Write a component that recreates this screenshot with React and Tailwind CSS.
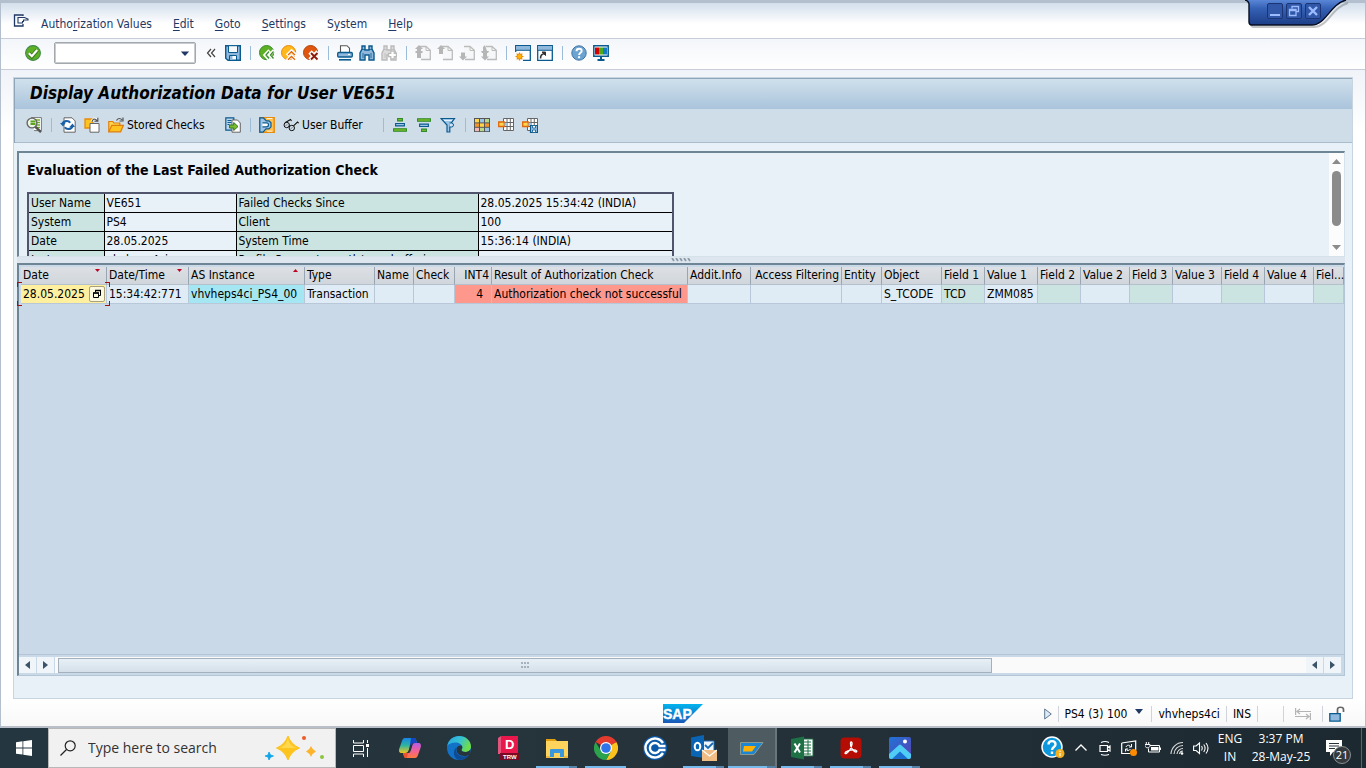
import { useState } from "react";

const menus = [
  ["Autho", "r", "ization Values"],
  ["", "E", "dit"],
  ["", "G", "oto"],
  ["", "S", "ettings"],
  ["S", "y", "stem"],
  ["", "H", "elp"],
];

const columns = [
  { label: "Date", width: 86, sort: "down" },
  { label: "Date/Time", width: 82, value: "15:34:42:771", sort: "down" },
  { label: "AS Instance", width: 116, value: "vhvheps4ci_PS4_00", sort: "up", cell: "bg-[#a4e6f2]" },
  { label: "Type", width: 70, value: "Transaction" },
  { label: "Name", width: 39 },
  { label: "Check", width: 41 },
  { label: "INT4", width: 37, value: "4", cell: "bg-[#ff988c]", number: true },
  { label: "Result of Authorization Check", width: 196, value: "Authorization check not successful", cell: "bg-[#ff988c]" },
  { label: "Addit.Info", width: 63 },
  { label: "Access Filtering", width: 91, number: true },
  { label: "Entity", width: 40 },
  { label: "Object", width: 60, value: "S_TCODE" },
  { label: "Field 1", width: 43, value: "TCD", cell: "bg-[#cbe4e2]" },
  { label: "Value 1", width: 53, value: "ZMM085" },
  { label: "Field 2", width: 43, cell: "bg-[#cbe4e2]" },
  { label: "Value 2", width: 49 },
  { label: "Field 3", width: 43, cell: "bg-[#cbe4e2]" },
  { label: "Value 3", width: 49 },
  { label: "Field 4", width: 43, cell: "bg-[#cbe4e2]" },
  { label: "Value 4", width: 49 },
  { label: "Fiel...", cell: "bg-[#cbe4e2]" },
];

const summary = [
  ["User Name", "VE651", "Failed Checks Since", "28.05.2025 15:34:42 (INDIA)"],
  ["System", "PS4", "Client", "100"],
  ["Date", "28.05.2025", "System Time", "15:36:14 (INDIA)"],
  ["Instance", "vhvheps4ci", "Profile Parameter auth/new_buffering", ""],
];

function Icon({ children, className = "size-4 shrink-0", box = "0 0 16 16" }) {
  return (
    <svg className={className} viewBox={box} fill="none" aria-hidden="true">
      {children}
    </svg>
  );
}

function ToolButton({ label, children, className = "w-[22px] justify-center" }) {
  return (
    <button type="button" aria-label={label} className={`flex h-[22px] shrink-0 items-center ${className}`}>
      {children}
    </button>
  );
}

function Separator({ className = "w-3" }) {
  return (
    <span className={`flex shrink-0 justify-center ${className}`}>
      <span className="h-[14px] w-px bg-[#9dbcd8]" />
    </span>
  );
}

/* ---------- standard toolbar icons ---------- */

function EnterIcon() {
  return (
    <Icon>
      <circle cx="8" cy="8" r="7.4" fill="#5db024" stroke="#3f8a4a" strokeWidth="1.1" />
      <path d="M3.8 8.4l3 3.1 5.4-6.4" stroke="#3d7c24" strokeWidth="4" />
      <path d="M3.8 8.2l3 3 5.4-6.2" stroke="#fff" strokeWidth="2.2" />
    </Icon>
  );
}

function SaveIcon() {
  return (
    <Icon>
      <path d="M.7 .7h14.600v14.600H3l-2.300-2z" fill="#8fb8dc" stroke="#0b5a8e" strokeWidth="1.400" />
      <path d="M3.500 .7h9v6.800h-9z" fill="#f4f9fd" stroke="#0b5a8e" />
      <path d="M4.500 10.500h7v4.500h-7z" fill="#fff" stroke="#0b5a8e" />
      <path d="M5 11h2.500v4H5z" fill="#8fb8dc" />
    </Icon>
  );
}

function NavIcon({ fill, edge, children }) {
  return (
    <Icon>
      <circle cx="7.600" cy="7.600" r="7.100" fill={fill} stroke={edge} />
      {children}
    </Icon>
  );
}

function PrintIcon() {
  return (
    <Icon>
      <path d="M3.500 7V.7h6.500l2.500 2.500V7" fill="#fff" stroke="#555" strokeWidth="1.100" />
      <rect x=".7" y="7.500" width="14.600" height="4.500" rx="1" fill="#8fb8dc" stroke="#0b5a8e" strokeWidth="1.300" />
      <path d="M2 14.800h12" stroke="#0b5a8e" strokeWidth="1.600" />
      <path d="M11 9.500h2" stroke="#fff" />
    </Icon>
  );
}

function FindIcon({ fill, edge, next }) {
  return (
    <Icon>
      <path d="M3 1h3v4h4V1h3v3l2 4v7h-5v-5H6v5H1V8l2-4z" fill={fill} stroke={edge} strokeWidth="1.400" />
      <path d="M3 4.500h3M10 4.500h3M4 8v5M12 8v5" stroke={edge} strokeWidth=".8" />
      {next && <path d="M11.500 5.500v9M7 10h9" stroke="#bbb" strokeWidth="4.400" />}
      {next && <path d="M11.500 6.700v6.600M8.200 10h6.600" stroke="#fff" strokeWidth="2.200" />}
    </Icon>
  );
}

function PageIcon({ arrows }) {
  return (
    <Icon>
      <path d="M5 1.500h6l4.300 3.800v9.200H6" fill="#f6f7f8" stroke="#bcbcbc" strokeWidth="1.300" />
      <path d="M11 1.500v4h4" stroke="#bcbcbc" />
      <path d={arrows} fill="#b6b6b6" />
    </Icon>
  );
}

function SessionIcon({ shortcut }) {
  return (
    <Icon>
      <path d="M.7 .7h14.600v14.600H.7z" fill="#fff" stroke="#0b5a8e" strokeWidth="1.300" />
      <path d="M1 1h14v4H1z" fill="#8fb8dc" />
      <path d="M1 5.300h14" stroke="#0b5a8e" />
      {shortcut ? (
        <>
          <path d="M3.500 13.500c0-3 1-4.500 4-5" stroke="#333" strokeWidth="1.600" />
          <path d="M5 7h3.500v3.500z" fill="#333" stroke="#333" />
        </>
      ) : (
        <>
          <path d="M0 7h8v9H0z" fill="#f9fafc" />
          <path d="M4.500 7.500v8M.5 11.500h8M1.700 8.700l5.600 5.600M7.300 8.700l-5.600 5.600" stroke="#e98b0c" strokeWidth="1.200" />
          <circle cx="4.500" cy="11.500" r="2.600" fill="#ffb400" stroke="#e98b0c" />
        </>
      )}
    </Icon>
  );
}

function HelpIcon() {
  return (
    <Icon>
      <circle cx="8" cy="8" r="7.200" fill="#6da3d0" stroke="#3f76a6" />
      <path d="M5.500 6.200c0-3.400 5.200-3.200 5.200-.2 0 1.800-2.600 1.900-2.600 4" stroke="#fff" strokeWidth="1.900" />
      <path d="M7.100 11.200h2v2h-2z" fill="#fff" />
    </Icon>
  );
}

function LayoutIcon() {
  return (
    <Icon>
      <path d="M.8 .8h14.400v10.400H.8z" fill="#fff" stroke="#0b5a8e" strokeWidth="1.500" />
      <path d="M2 2.500h4v7H2z" fill="#d40000" />
      <path d="M6 2.500h4v7H6z" fill="#4bab1a" />
      <path d="M10 2.500h4v7h-4z" fill="#1579c4" />
      <path d="M8 11v3.500M4.500 15h7" stroke="#0b5a8e" strokeWidth="2" />
    </Icon>
  );
}

/* ---------- application toolbar icons ---------- */

function DetailIcon() {
  return (
    <Icon>
      <path d="M5 .6h10.400v13H8" fill="#fff" stroke="#777" />
      <path d="M8 3h6M9.500 5.500H14M9.500 8H14M9.500 10.500H14" stroke="#6caf22" strokeWidth="1.500" />
      <circle cx="6" cy="6" r="4.900" fill="#eef5e8" stroke="#666" strokeWidth="1.400" />
      <path d="M4.500 4.500h5M4.500 7h5" stroke="#5aa51c" strokeWidth="2" />
      <path d="M9.500 9.800l5.500 5.400" stroke="#555" strokeWidth="2.400" />
    </Icon>
  );
}

function RefreshIcon() {
  return (
    <Icon>
      <path d="M4 .8h8l3.200 3.200v11.200H4z" fill="#fff" stroke="#666" />
      <path d="M2.500 7c.8-3.500 6-4 7.600-1.200M12.500 9c-.8 3.500-6 4-7.600 1.200" stroke="#1860a8" strokeWidth="2.200" />
      <path d="M0 6h5.500L3 9.500zM9.500 10H15l-2.500-3.500z" fill="#1860a8" />
    </Icon>
  );
}

function VariantIcon() {
  return (
    <Icon>
      <path d="M1 2h8v9H1z" fill="#ffc31f" stroke="#e98b0c" strokeWidth="1.300" />
      <path d="M6 6.500h9v8.700H6z" fill="#fff" stroke="#666" />
      <path d="M8 5c.5-3 3-4 5-1.500" stroke="#fff" strokeWidth="3" />
      <path d="M8 5c.5-3 3-4 5-1.500M13.800 .8v3.400h-3.300" stroke="#555" strokeWidth="1.200" />
    </Icon>
  );
}

function FolderIcon() {
  return (
    <Icon>
      <path d="M.8 14.500v-10h4l1 1.500h6v2.500" fill="#ffd54d" stroke="#e07e0a" strokeWidth="1.200" />
      <path d="M.8 14.800l3-6.500h11.600l-2.800 6.500z" fill="#ffc31f" stroke="#e07e0a" strokeWidth="1.200" />
      <path d="M8.500 3.500c1.200-2.600 4-2.600 5.500-.5M15 .5v3.500h-3.500" stroke="#555" strokeWidth="1.200" />
    </Icon>
  );
}

function TransferIcon() {
  return (
    <Icon>
      <path d="M.8 .8h8v12.400h-8z" fill="#bcd6ec" stroke="#0b5a8e" strokeWidth="1.200" />
      <path d="M2.500 3.500h4M2.500 5.500h4M2.500 7.500h2" stroke="#0b5a8e" />
      <path d="M7 3h5.500L15.300 6v9.200H7z" fill="#fff" stroke="#666" />
      <path d="M4.500 8h4.200V5.500L13 9.500l-4.300 4V11H4.500z" fill="#7dbb2a" stroke="#2d7a2a" />
    </Icon>
  );
}

function CompareIcon() {
  return (
    <Icon>
      <path d="M.8 .8h14.400v14.400H.8z" fill="#ffc04d" stroke="#e98b0c" strokeWidth="1.400" />
      <path d="M.8 .8h3.500l3 3H10l2 2v4l-2 2H7l-3 3.400H.8z" fill="#9cc4e6" stroke="#0b5a8e" strokeWidth="1.200" />
      <path d="M3.500 5.800h4a2 2 0 010 4h-4" fill="#fff" stroke="#0b5a8e" strokeWidth="1.200" />
      <path d="M7.500 1.500h6M8 14.200h5.500" stroke="#fff2d8" />
    </Icon>
  );
}

function GlassesIcon() {
  return (
    <Icon>
      <circle cx="3.700" cy="8" r="2.700" stroke="#111" />
      <circle cx="8.800" cy="11" r="2.700" stroke="#111" />
      <path d="M5.800 9.500l1-.5M2 5.800L7.500 2.500l1 1.500M10.500 8.800l4-3.800 1.200 1.200" stroke="#111" strokeWidth="1.100" />
      <path d="M2.500 9l2-2M7.500 12.200l2.300-2.300" stroke="#777" strokeWidth=".8" />
    </Icon>
  );
}

function SortIcon({ desc }) {
  return (
    <Icon className={desc ? "size-4 rotate-180" : "size-4"}>
      <path d="M5.600 1.500h4.800v2.400H5.600z" fill="#7dbb2a" stroke="#2d8a2a" strokeWidth="1.100" />
      <path d="M3.600 6.500h8.800v2.400H3.600z" fill="#9cc4e6" stroke="#0b5a8e" strokeWidth="1.100" />
      <path d="M1.600 11.700h12.800v2.600H1.600z" fill="#7dbb2a" stroke="#2d8a2a" strokeWidth="1.100" />
    </Icon>
  );
}

function FilterIcon() {
  return (
    <Icon>
      <path d="M1 1.500h13.500L9.800 8v7H7V8z" fill="#9cc4e6" stroke="#0b5a8e" strokeWidth="1.200" />
      <path d="M4 3.500h8" stroke="#e4f0fa" />
      <path d="M9.500 6h2a2 2 0 010 4h-2" fill="#cfe3f4" stroke="#0b5a8e" />
    </Icon>
  );
}

function GridColorIcon() {
  const fills = ["#ffd54d", "#9cc4e6", "#b7d98c", "#f0962a", "#ffd54d", "#f0962a", "#f3b7b7", "#b7d98c", "#9cc4e6"];
  return (
    <Icon>
      <path d="M0 1h16v14H0z" fill="#555" />
      {fills.map((fill, i) => (
        <rect key={i} x={1 + (i % 3) * 5} y={2 + Math.floor(i / 3) * 4.4} width="4" height="3.400" fill={fill} />
      ))}
    </Icon>
  );
}

function GridPickIcon({ save }) {
  return (
    <Icon>
      <path d="M5.500 1.500h10v12h-10zM5.500 5.500h10M5.500 9.500h10M9 1.500v12M12.300 1.500v12" fill="#fff" stroke="#666" />
      <path d="M.7 5h5.600v4.500H.7z" fill="#ffd54d" stroke="#e0660a" strokeWidth="1.300" />
      <path d="M6.500 7.200H9" stroke="#9cc4e6" strokeWidth="3" />
      {save && (
        <>
          <path d="M8.500 8.500h7v7h-7z" fill="#9cc4e6" stroke="#0b5a8e" strokeWidth="1.200" />
          <path d="M10.500 8.500h3V11h-3zM10.500 13h3v2.500h-3z" fill="#fff" stroke="#0b5a8e" strokeWidth=".8" />
        </>
      )}
    </Icon>
  );
}

/* ---------- window parts ---------- */

function WindowControls() {
  const button = "flex size-4 items-center justify-center rounded-xs border border-[#1b3574] bg-[#3158a8]";
  return (
    <div className="absolute -top-[3px] right-[14px] h-7 w-[106px]">
      <svg className="absolute inset-0 size-full" viewBox="0 0 106 28" fill="none" aria-hidden="true">
        <defs>
          <linearGradient id="tab" x1="0" y1="0" x2="0" y2="1">
            <stop offset="0" stopColor="#5a86d8" />
            <stop offset=".35" stopColor="#3460b4" />
            <stop offset="1" stopColor="#1d3d86" />
          </linearGradient>
        </defs>
        <path d="M2 2q4 1 4 5v17q0 3 3 3h60c14 0 18-20 34-24" stroke="#555" strokeOpacity=".35" strokeWidth="2" />
        <path d="M0 0q4 1 4 4v18q0 3 3 3h60c14 0 18-21 34-25z" fill="url(#tab)" />
        <path d="M0 0q4 1 4 4v18q0 3 3 3h60c14 0 18-21 34-25" stroke="#060d20" strokeWidth="1.400" />
      </svg>
      <div className="relative flex gap-[3px] pt-[3px] pl-[22px]">
        <button type="button" aria-label="Minimize" className={button}>
          <Icon className="size-3" box="0 0 12 12"><path d="M1 10h10" stroke="#9dbcff" strokeWidth="2" /></Icon>
        </button>
        <button type="button" aria-label="Restore" className={button}>
          <Icon className="size-3" box="0 0 12 12">
            <path d="M4 3.500V1.500h6.500v5H8.500M1.500 4.500h6.500v6H1.500zM1.500 5.500H8" stroke="#9dbcff" strokeWidth="1.300" />
          </Icon>
        </button>
        <button type="button" aria-label="Close" className={button}>
          <Icon className="size-3" box="0 0 12 12"><path d="M2 2l8 8M10 2l-8 8" stroke="#9dbcff" strokeWidth="2.400" /></Icon>
        </button>
      </div>
    </div>
  );
}

function MenuBar() {
  return (
    <nav className="flex h-9 items-center border-b border-[#c8ccd8] bg-gradient-to-b from-[#d3dfec] via-white via-60% to-white pt-[6px] pl-3 text-[#1f3864]">
      <button type="button" aria-label="Window menu" className="mr-3 mb-[6px]">
        <Icon>
          <path d="M10 3V2H1.500v11H10v-2" stroke="#1f3864" strokeWidth="1.300" />
          <path d="M5 4.500h6.500l3.500 1.500v1h-4.500v1.500h-1V10H5z" fill="#fff" stroke="#1f3864" strokeWidth="1.100" />
        </Icon>
      </button>
      <div className="flex gap-[21px]">
        {menus.map(([before, key, after]) => (
          <button type="button" key={before + key + after}>
            {before}<span className="underline underline-offset-2">{key}</span>{after}
          </button>
        ))}
      </div>
    </nav>
  );
}

function StandardToolbar() {
  const [command, setCommand] = useState("");
  return (
    <div className="flex h-[31px] items-center border-b border-[#c8ccd8] bg-gradient-to-b from-[#f3f6fa] to-white pb-[2px] pl-[21px]">
      <ToolButton label="Enter"><EnterIcon /></ToolButton>
      <div className="mx-[10px] flex h-[22px] w-[142px] items-center rounded-xs border border-[#a3a8ad] bg-white shadow-[inset_0_0_0_1px_#c8ccd0]">
        <input
          aria-label="Command field"
          value={command}
          onChange={(e) => setCommand(e.target.value)}
          className="min-w-0 flex-1 px-1 outline-none"
        />
        <button type="button" aria-label="Command history" className="px-[5px]">
          <Icon className="h-[5px] w-[10px]" box="0 0 10 6"><path d="M0 .5h10L5 6z" fill="#1f3864" /></Icon>
        </button>
      </div>
      <div className="-ml-[6px] flex items-center">
        <ToolButton label="Hide command field">
          <Icon className="size-[10px]" box="0 0 10 10"><path d="M5 1L1.500 5 5 9M9 1L5.500 5 9 9" stroke="#444" strokeWidth="1.200" /></Icon>
        </ToolButton>
        <ToolButton label="Save"><SaveIcon /></ToolButton>
        <Separator />
        <ToolButton label="Back">
          <NavIcon fill="#5db024" edge="#3b8c2c">
            <path d="M10.500 5.500L6 10l4.500 5M15 5.500L10.500 10l4.500 5" stroke="#fff" strokeWidth="3.200" />
            <path d="M10 6.500L7 10l3 3.500M14.500 6.500l-3 3.500 3 3.500" stroke="#3b8c2c" strokeWidth="1.300" />
          </NavIcon>
        </ToolButton>
        <ToolButton label="Exit">
          <NavIcon fill="#ffb81c" edge="#e98b0c">
            <path d="M6 10.500L10.500 6l5 4.500M6 15.500l4.500-4.500 5 4.500" stroke="#fff" strokeWidth="3.200" />
            <path d="M7 10l3.500-3.300L14 10M7 14.800l3.500-3.300 3.500 3.300" stroke="#e0660a" strokeWidth="1.300" />
          </NavIcon>
        </ToolButton>
        <ToolButton label="Cancel">
          <NavIcon fill="#e0560f" edge="#b5440c">
            <path d="M7 7l8 8M15 7l-8 8" stroke="#fff" strokeWidth="4.600" />
            <path d="M8 8l6.500 6.500M14.500 8L8 14.500" stroke="#8c1a0a" strokeWidth="1.900" />
          </NavIcon>
        </ToolButton>
        <Separator />
        <ToolButton label="Print"><PrintIcon /></ToolButton>
        <ToolButton label="Find"><FindIcon fill="#8fb8dc" edge="#0b5a8e" /></ToolButton>
        <ToolButton label="Find next"><FindIcon fill="#dcdcdc" edge="#bbb" next /></ToolButton>
        <Separator />
        <ToolButton label="First page"><PageIcon arrows="M4 0l4 4H6v2h2l-1 1 1 1H6v5H2V8H0l1-1-1-1h2V4H0z" /></ToolButton>
        <ToolButton label="Previous page"><PageIcon arrows="M4 0l4 4H6v5H2V4H0z" /></ToolButton>
        <ToolButton label="Next page"><PageIcon arrows="M4 15.500l4-4H6v-4H2v4H0z" /></ToolButton>
        <ToolButton label="Last page"><PageIcon arrows="M4 15.500l4-4H6V8h1l1-2H6L4 0 2 2v4H0l1 2h1v3.500H0z" /></ToolButton>
        <Separator />
        <ToolButton label="New session"><SessionIcon /></ToolButton>
        <ToolButton label="Create shortcut"><SessionIcon shortcut /></ToolButton>
        <Separator />
        <ToolButton label="Help"><HelpIcon /></ToolButton>
        <ToolButton label="Customize layout"><LayoutIcon /></ToolButton>
      </div>
    </div>
  );
}

function AppToolbar() {
  const square = "w-6 justify-center";
  return (
    <div className="flex h-[34px] items-center border-b border-[#a9bccb] bg-[#cfdde8] pb-[2px] pl-[7px]">
      <ToolButton label="Details" className={square}><DetailIcon /></ToolButton>
      <Separator className="w-[10px]" />
      <ToolButton label="Refresh" className={square}><RefreshIcon /></ToolButton>
      <ToolButton label="Get variant" className={square}><VariantIcon /></ToolButton>
      <ToolButton label="Stored Checks" className="w-[117px] gap-[3px] pl-1">
        <FolderIcon /><span>Stored Checks</span>
      </ToolButton>
      <ToolButton label="Other user" className={square}><TransferIcon /></ToolButton>
      <Separator className="w-[10px]" />
      <ToolButton label="Compare" className={square}><CompareIcon /></ToolButton>
      <ToolButton label="User Buffer" className="w-[99px] gap-[3px] pl-1">
        <GlassesIcon /><span>User Buffer</span>
      </ToolButton>
      <Separator className="w-[10px]" />
      <ToolButton label="Sort ascending" className={square}><SortIcon /></ToolButton>
      <ToolButton label="Sort descending" className={square}><SortIcon desc /></ToolButton>
      <ToolButton label="Filter" className={square}><FilterIcon /></ToolButton>
      <Separator className="w-[10px]" />
      <ToolButton label="Choose layout" className={square}><GridColorIcon /></ToolButton>
      <ToolButton label="Change layout" className={square}><GridPickIcon /></ToolButton>
      <ToolButton label="Save layout" className={square}><GridPickIcon save /></ToolButton>
    </div>
  );
}

function SummaryPane() {
  return (
    <section className="flex h-[106px] shrink-0 overflow-hidden border-t-2 border-r border-b border-l-2 border-t-[#6d8594] border-r-[#d6e2ea] border-b-[#d6e2ea] border-l-[#6d8594] bg-[#e8f0f8]">
      <div className="min-w-0 flex-1 overflow-hidden pt-[7px] pl-2">
        <h2 className="text-sm leading-5 font-bold">Evaluation of the Last Failed Authorization Check</h2>
        <table className="mt-3 w-[647px] table-fixed border-collapse border-2 border-[#50546c]">
          <colgroup>
            <col className="w-[76px]" />
            <col className="w-[132px]" />
            <col className="w-[242px]" />
            <col />
          </colgroup>
          <tbody>
            {summary.map(([name, value, name2, value2]) => (
              <tr key={name} className="h-[19px] leading-[18px]">
                <th scope="row" className="border border-black bg-[#cbe4e2] px-[2px] text-left font-normal">{name}</th>
                <td className="border border-black px-[2px]">{value}</td>
                <th scope="row" className="border border-black bg-[#cbe4e2] px-[2px] text-left font-normal">{name2}</th>
                <td className="border border-black px-[2px]">{value2}</td>
              </tr>
            ))}
          </tbody>
        </table>
      </div>
      {/* vertical scroll bar */}
      <div className="flex w-[15px] shrink-0 flex-col items-center bg-[#fcfcfc] py-[6px]">
        <Icon className="h-[5px] w-[9px]" box="0 0 9 5"><path d="M0 5h9L4.500 0z" fill="#8b8b8b" /></Icon>
        <div className="mt-[7px] h-[55px] w-[9px] rounded-full bg-[#8b8b8b]" />
        <Icon className="mt-auto h-[5px] w-[9px]" box="0 0 9 5"><path d="M0 0h9L4.500 5z" fill="#8b8b8b" /></Icon>
      </div>
    </section>
  );
}

function SelectedCell() {
  const corner = "absolute size-[5px] border-[#a01010]";
  return (
    <div className="relative flex h-[18px] items-center bg-[#fff0a0]">
      <span className="flex-1 pl-[2px]">28.05.2025</span>
      <button type="button" aria-label="Possible entries" className="mr-px flex size-4 items-center justify-center rounded-xs border border-[#a9a17c] bg-[#fdf8e0]">
        <Icon className="size-[10px]" box="0 0 10 10">
          <path d="M3.500 3V1.500h5v5H7M1.500 4h5v4.500h-5z" stroke="#000" />
          <path d="M1 4h6M3 1.500h6" stroke="#000" strokeWidth="1.600" />
        </Icon>
      </button>
      <span className={`${corner} -top-[3px] -left-1 border-t border-l`} />
      <span className={`${corner} -top-[3px] -right-1 border-t border-r`} />
      <span className={`${corner} -bottom-[3px] -left-1 border-b border-l`} />
      <span className={`${corner} -right-1 -bottom-[3px] border-r border-b`} />
    </div>
  );
}

function SortMark({ up }) {
  return (
    <Icon className="absolute top-[2px] right-[6px] h-[3px] w-[5px]" box="0 0 5 3">
      <path d={up ? "M0 3h5L2.500 0z" : "M0 0h5L2.500 3z"} fill="#c00020" />
    </Icon>
  );
}

function ScrollArrow({ left }) {
  return (
    <button type="button" aria-label={left ? "Scroll left" : "Scroll right"} className="flex h-4 w-[18px] items-center justify-center border-r border-[#cad9e8] bg-[#f0f5fa]">
      <Icon className="h-2 w-[5px]" box="0 0 5 8">
        <path d={left ? "M5 0v8L0 4z" : "M0 0v8l5-4z"} fill="#3c5468" />
      </Icon>
    </button>
  );
}

function ResultGrid() {
  return (
    <section className="flex min-h-0 flex-1 flex-col border-t-2 border-r border-b border-l-2 border-t-[#6d8594] border-r-[#b4c6d6] border-b-[#b4c6d6] border-l-[#6d8594] bg-[#cad9e8]">
      <div className="min-h-0 flex-1 border-b border-[#b4c4d6] pt-[2px] pl-[2px]">
        <table className="w-full table-fixed border-separate border-spacing-0">
          <colgroup>
            {columns.map((c) => <col key={c.label} style={c.width ? { width: c.width } : undefined} />)}
          </colgroup>
          <thead>
            <tr className="h-[18px] leading-[17px]">
              {columns.map((c) => (
                <th
                  key={c.label}
                  scope="col"
                  className={`relative border-r border-b border-r-[#98a6b4] border-b-[#b4c0cc] bg-gradient-to-b from-[#dde0e4] to-[#d0d6dc] px-[2px] font-normal whitespace-nowrap ${c.number ? "text-right" : "text-left"}`}
                >
                  {c.label}
                  {c.sort && <SortMark up={c.sort === "up"} />}
                </th>
              ))}
            </tr>
          </thead>
          <tbody>
            <tr className="h-[19px] leading-[18px]">
              {columns.map((c, i) => (
                <td
                  key={c.label}
                  className={`border-r border-b border-[#b8c8d8] whitespace-nowrap ${i === 0 ? "" : "px-[2px]"} ${c.cell || "bg-[#dfebf5]"} ${c.value === "4" ? "pr-2 text-right" : ""}`}
                >
                  {i === 0 ? <SelectedCell /> : c.value}
                </td>
              ))}
            </tr>
          </tbody>
        </table>
      </div>
      {/* horizontal scroll bar */}
      <div className="my-[2px] mr-[2px] flex h-4 shrink-0 bg-[#fafafa]">
        <ScrollArrow left />
        <ScrollArrow />
        <div className="flex flex-1 items-center px-[3px]">
          <div className="flex h-[15px] w-3/4 items-center justify-center border border-[#a4b0bc] bg-gradient-to-b from-[#e8f0f6] to-[#d4e0ea]">
            <Icon className="h-[6px] w-2" box="0 0 8 6">
              <path d="M0 1h2M3 1h2M6 1h2M0 5h2M3 5h2M6 5h2" stroke="#93a0ac" strokeWidth="1.500" />
            </Icon>
          </div>
        </div>
        <ScrollArrow left />
        <ScrollArrow />
      </div>
    </section>
  );
}

function StatusBar() {
  const divider = "h-4 w-px bg-[#d0d4da]";
  return (
    <footer className="flex h-[29px] shrink-0 items-center border-b-2 border-[#b9bfc8] bg-gradient-to-b from-white to-[#f8f8f8] pt-[2px]">
      <div className="flex-1 px-[10px]" />
      <svg className="h-[19px] w-10 shrink-0" viewBox="0 0 40 19" role="img" aria-label="SAP">
        <defs>
          <linearGradient id="sap" x1="0" y1="0" x2="0" y2="1">
            <stop offset="0" stopColor="#00b4ee" />
            <stop offset="1" stopColor="#1a58b8" />
          </linearGradient>
        </defs>
        <path d="M0 0h40L21 19H0z" fill="url(#sap)" />
        <text x="0" y="15" className="font-['Liberation_Sans'] text-[14px] font-bold" fill="#fff" stroke="#fff" strokeWidth=".4">SAP</text>
      </svg>
      <div className="flex flex-1 items-center justify-end pr-5">
        <button type="button" aria-label="Show system messages" className="mr-[6px]">
          <Icon className="h-3 w-2" box="0 0 8 12"><path d="M.7 1v10L7.300 6z" fill="#dcebf7" stroke="#607890" /></Icon>
        </button>
        <span className={divider} />
        <button type="button" className="flex items-center gap-[6px] px-[6px]">
          <span className="mr-[2px]">PS4 (3) 100</span>
          <Icon className="mr-[2px] mb-1 h-[5px] w-2" box="0 0 8 5"><path d="M0 0h8L4 5z" fill="#1f3864" /></Icon>
        </button>
        <span className={divider} />
        <span className="px-[6px]">vhvheps4ci</span>
        <span className={divider} />
        <span className="px-[6px]">INS</span>
        <span className={divider} />
        <span className="w-[25px]" />
        <span className={divider} />
        <Icon className="mx-[11px] h-3 w-4" box="0 0 16 12">
          <path d="M.6 0v7M2 3.500h14M5 1L2 3.500 5 6M15.400 5v7M0 8.500h14M11 6l3 2.500-3 2.500" stroke="#b4b4b4" strokeWidth="1.200" />
        </Icon>
        <span className={divider} />
        <Icon className="ml-[6px] size-4">
          <path d="M8.500 7V3.500c0-3 6-3 6 0V6" stroke="#666" strokeWidth="1.700" />
          <path d="M.8 7.700h10.400v7.500H.8z" fill="#8fb8dc" stroke="#0b5a8e" strokeWidth="1.300" />
        </Icon>
      </div>
    </footer>
  );
}

/* ---------- taskbar ---------- */

const apps = [
  {
    name: "Task View",
    icon: (
      <Icon className="size-[18px]" box="0 0 18 18">
        <path d="M1.500 1v3h10V1M1.500 6.500h10v6h-10zM1.500 18v-3h10v3M15.500 1v3M15.500 9v9" stroke="#fff" />
        <path d="M14 5h3v3h-3z" fill="#fff" />
      </Icon>
    ),
  },
  {
    name: "Copilot",
    icon: (
      <Icon className="size-6" box="0 0 24 24">
        <defs>
          <linearGradient id="cpa" x1="0" y1="0" x2="0" y2="1">
            <stop offset="0" stopColor="#1687e8" /><stop offset=".5" stopColor="#2fb4a0" /><stop offset="1" stopColor="#f2c61f" />
          </linearGradient>
          <linearGradient id="cpb" x1="0" y1="0" x2="0" y2="1">
            <stop offset="0" stopColor="#b45ce8" /><stop offset=".5" stopColor="#f0609a" /><stop offset="1" stopColor="#ff7a3c" />
          </linearGradient>
        </defs>
        <path d="M7 2h9c2 0 2 2 3 5h-5L11 14c-1 2-2 3-4 3H4c-3 0-3.500-2-2.500-5L4 5c.7-2 1.300-3 3-3z" fill="url(#cpa)" />
        <path d="M13 2h3c2 0 2 2 3 5h-3c-2 0-2.500 1-3 3l-2 5z" fill="#1644c4" />
        <path d="M17 7h3c3 0 3.500 2 2.500 5L20 19c-.7 2-1.300 3-3 3H8c-2 0-2-2-3-5h5c2 0 2.500-2 3-3l1.500-5c.4-1.300 1-2 2.500-2z" fill="url(#cpb)" />
        <path d="M5 17h5L9 22H8c-2 0-2-2-3-5z" fill="#e8552f" />
        <path d="M12.500 8.500h1.500l-2.500 8h-1.500z" fill="#26343c" />
      </Icon>
    ),
  },
  {
    name: "Edge",
    icon: (
      <Icon className="size-6" box="0 0 24 24">
        <defs>
          <linearGradient id="edge" x1="0" y1="0" x2="1" y2=".4">
            <stop offset="0" stopColor="#2aa5dd" /><stop offset=".55" stopColor="#35c1d4" /><stop offset="1" stopColor="#6fdc4a" />
          </linearGradient>
        </defs>
        <circle cx="12" cy="12" r="12" fill="#1272c8" />
        <path d="M.2 10C1.500 3.500 6.500 0 12 0c7 0 12 5 12 10.500 0 3.500-2.500 5.500-5.500 5.500-3 0-4.500-1-4-2.200.4-.8.800-1.300.800-2.300C15.300 8.500 12 6.500 8.500 6.500 5 6.500 1.500 8 .2 10z" fill="url(#edge)" />
        <path d="M9.500 11c-2 5 2 9.500 7 9.500 2.500 0 4-.7 5.500-1.700C20 22 16.500 24 12.500 24 7.500 23.500 4.500 16 9.500 11z" fill="#0f4a94" />
        <path d="M14.800 9.500c1 2 .5 3-.3 4.300-.4 1.200 1 2.200 4 2.200 2 0 4-1 5-2.500l-1 5c-6 3.500-13.500.5-13-5.500.3-2 2-4 5.300-3.500z" fill="#26343c" />
      </Icon>
    ),
  },
  {
    name: "Design Review",
    icon: (
      <Icon className="size-6" box="0 0 24 24">
        <path d="M5 0h17v17H5z" fill="#e8174c" />
        <path d="M2 2l3-2v18H2z" fill="#e2557c" />
        <path d="M4 17h19v7H4z" fill="#780a26" />
        <text x="9" y="13" className="font-['Liberation_Sans'] text-[13px] font-bold" fill="#fff">D</text>
        <text x="7" y="23" className="font-['Liberation_Sans'] text-[6px] font-bold" fill="#fff">TRW</text>
      </Icon>
    ),
  },
  {
    name: "File Explorer",
    open: "group",
    icon: (
      <Icon className="size-6" box="0 0 24 24">
        <path d="M1 3h9l2 2v4H1z" fill="#e2a010" />
        <path d="M1 5h22v17H1z" fill="#ffd45c" />
        <path d="M5 21v-7q0-1 1-1h12q1 0 1 1v7h-4v-4H9v4z" fill="#3a97dc" />
        <path d="M1 20h4v2H1zM19 20h4v2h-4z" fill="#f0b63c" />
      </Icon>
    ),
  },
  {
    name: "Chrome",
    open: "single",
    icon: (
      <Icon className="size-6" box="0 0 24 24">
        <path d="M12 12L1.600 6A12 12 0 0122.400 6z" fill="#e33b2e" />
        <path d="M12 12h0L22.400 6A12 12 0 0112 24l5-9z" fill="#fcc31e" />
        <path d="M12 12l5 3-5 9A12 12 0 011.600 6l5.500 9z" fill="#2ba24c" />
        <path d="M12 6h10.400" stroke="#e33b2e" />
        <circle cx="12" cy="12" r="6" fill="#fff" />
        <circle cx="12" cy="12" r="4.800" fill="#2f74e8" />
      </Icon>
    ),
  },
  {
    name: "Communicator",
    icon: (
      <Icon className="size-6" box="0 0 24 24">
        <circle cx="12" cy="12" r="12" fill="#0b58a8" />
        <path d="M20 7A9.500 9.500 0 1020 17" stroke="#fff" strokeWidth="2.400" />
        <path d="M22.500 10H16.500A5 5 0 1016.500 14H22.500" stroke="#fff" strokeWidth="2.400" />
      </Icon>
    ),
  },
  {
    name: "Outlook",
    open: "group",
    icon: (
      <Icon className="size-[26px]" box="0 0 26 26">
        <path d="M12 6h11v13H12z" fill="#eef5fb" stroke="#1268b8" />
        <path d="M14 10l3 3 5-5" stroke="#1268b8" strokeWidth="1.800" />
        <path d="M0 2.500L13 0v23L0 21z" fill="#0a64b4" />
        <ellipse cx="6.500" cy="11.500" rx="2.800" ry="3.800" stroke="#fff" strokeWidth="2" />
        <path d="M11 15h15v11H11z" fill="#f2bd84" />
        <path d="M11 15l7.500 6L26 15" stroke="#fff" strokeWidth="1.200" />
      </Icon>
    ),
  },
  {
    name: "SAP Logon",
    open: "group",
    active: true,
    icon: (
      <Icon className="h-[13px] w-6" box="0 0 24 13">
        <path d="M.5 .5h22.500L14 12.500H.5z" fill="#1c87d0" stroke="#8a9a90" />
        <path d="M4 4h12l-4 5.500H3z" fill="#ffb000" />
      </Icon>
    ),
  },
  {
    name: "Excel",
    open: "group",
    icon: (
      <Icon className="size-6" box="0 0 24 24">
        <path d="M12 3h11v17H12z" fill="#fff" stroke="#1e7145" />
        <path d="M14 6h7M14 9h7M14 12h7M14 15h7M14 18h7M18 4v15" stroke="#1e7145" />
        <path d="M1 3l13-2.500v23L1 21z" fill="#1e7145" />
        <path d="M4.500 7.500l5.500 9M10 7.500l-5.500 9" stroke="#fff" strokeWidth="2" />
      </Icon>
    ),
  },
  {
    name: "Acrobat",
    open: "group",
    icon: (
      <Icon className="size-[22px]" box="0 0 22 22">
        <rect x=".5" y=".5" width="21" height="21" rx="4" fill="#b50c04" />
        <path d="M11 5c2 0 1 4-1 7.500S5 17.500 5 16s5-3.200 8.500-3.200S17.500 15 16 15c-2.500 0-6-5.500-5.500-8.500 0-1 .2-1.500.5-1.500z" stroke="#fff" strokeWidth="1.300" />
      </Icon>
    ),
  },
  {
    name: "Photos",
    open: "group",
    icon: (
      <Icon className="size-6" box="0 0 24 24">
        <defs>
          <linearGradient id="photo" x1="0" y1="0" x2="1" y2="1">
            <stop offset="0" stopColor="#1f74d8" /><stop offset="1" stopColor="#5b3fb0" />
          </linearGradient>
        </defs>
        <rect x="1" y="1" width="22" height="22" rx="2" fill="url(#photo)" />
        <path d="M1 18L11 9q1-1 2 0l10 9v3q0 2-2 2H3q-2 0-2-2z" fill="#4fcdf4" />
        <path d="M4 23l8-7.500 8 7.500z" fill="#1b6fd0" />
        <circle cx="17" cy="5.500" r="2" fill="#fff" />
      </Icon>
    ),
  },
];

function TaskbarApp({ app }) {
  return (
    <button
      type="button"
      aria-label={app.name}
      className={`relative flex w-[49px] items-center justify-center ${app.active ? "border-r-2 border-[#6a767b] bg-[#4e5b61]" : ""}`}
    >
      {app.icon}
      {app.open && (
        <span className={`absolute bottom-0 flex h-[2px] ${app.active ? "inset-x-0" : "inset-x-1"}`}>
          <span className="flex-1 bg-[#76b9ed]" />
          {app.open === "group" && <span className="w-2 bg-[#5482a8]" />}
        </span>
      )}
    </button>
  );
}

function Taskbar() {
  return (
    <div className="flex h-10 shrink-0 bg-gradient-to-r from-[#243640] via-[#26333a] via-45% to-[#1c2930] font-['Open_Sans','Noto_Sans',sans-serif] text-white">
      <button type="button" aria-label="Start" className="flex w-12 items-center justify-center">
        <Icon><path d="M0 2.300l6.500-1v6.200H0zM7.300 1.200L16 0v7.500H7.300zM0 8.400h6.500v6.200L0 13.700zM7.300 8.400H16V16l-8.700-1.200z" fill="#fff" /></Icon>
      </button>
      <label className="flex w-72 items-center border border-[#b8b8b8] bg-[#f1f1f1] pr-[10px] pl-[11px]">
        <Icon className="size-4 shrink-0">
          <circle cx="10.200" cy="5.800" r="5" stroke="#222" strokeWidth="1.200" />
          <path d="M6.500 9.500L.5 15.500" stroke="#222" strokeWidth="1.300" />
        </Icon>
        <input
          aria-label="Type here to search"
          placeholder="Type here to search"
          className="ml-3 min-w-0 flex-1 text-sm text-[#333] outline-none placeholder:text-[#333]"
        />
        <Icon className="h-6 w-[60px] shrink-0" box="0 0 60 24">
          <path d="M23 0q3 8.500 11.500 12-8.500 3.500-11.500 12-3-8.500-11.500-12 8.500-3.500 11.500-12z" fill="#fdc41f" stroke="#fdc41f" strokeLinejoin="round" />
          <path d="M23 2q1 8 9 10l-18 0q7-2 9-10z" fill="#ffd84d" />
          <path d="M46 10q1.500 4 5 5.500-3.500 1.500-5 5.500-1.500-4-5-5.500 3.500-1.500 5-5.500z" fill="#fdb32a" />
          <path d="M4 16l1.500 3 3 1-3 1.200L4 24l-1-3-3-1 3-1z" fill="#0ea5e9" stroke="#0ea5e9" strokeWidth=".8" />
          <circle cx="39" cy="2" r="2" fill="#f05a28" />
          <circle cx="57" cy="21" r="2" fill="#8cc63f" />
        </Icon>
      </label>
      {apps.map((app) => <TaskbarApp key={app.name} app={app} />)}

      {/* notification area */}
      <div className="ml-auto flex items-center">
        <button type="button" aria-label="Support" className="flex w-8 justify-center">
          <Icon className="size-6" box="0 0 24 24">
            <circle cx="11" cy="11" r="10" fill="#0d97dc" stroke="#fff" strokeWidth="1.500" />
            <path d="M7.500 8.500c0-4.500 7-4.500 7 0 0 2.500-3.500 2.500-3.500 5.500M11 15.500v2.500" stroke="#fff" strokeWidth="2.400" />
            <circle cx="19" cy="17.500" r="4.500" fill="#f5ae1c" />
            <path d="M19 14.800v1.200M19 17v3.200" stroke="#fff" strokeWidth="1.200" />
          </Icon>
        </button>
        <button type="button" aria-label="Show hidden icons" className="flex w-6 justify-center">
          <Icon className="size-3" box="0 0 12 12"><path d="M.5 8.500L6 3l5.500 5.500" stroke="#fff" strokeWidth="1.300" /></Icon>
        </button>
        <button type="button" aria-label="Meet now" className="flex w-6 justify-center">
          <Icon>
            <path d="M3 5.500h7.500v6H3zM10.500 7.500L13 6v5l-2.500-1.500M4 2.500Q8 .5 12 2.500M4 14.500q4 1.500 8 0" stroke="#fff" strokeWidth="1.200" />
          </Icon>
        </button>
        <button type="button" aria-label="Updates" className="flex w-6 justify-center">
          <Icon>
            <path d="M.7 3l14-2v9M.7 3v10.500H9" stroke="#fff" strokeWidth="1.200" />
            <path d="M5 7c1-2.500 4-2 4.500-.5M10.500 4v3H8M9.500 9c-1 2-4 1.800-4.500.3M4.500 11.500V9H7" stroke="#fff" />
            <circle cx="12.500" cy="12.500" r="3.500" fill="#ff8c00" />
          </Icon>
        </button>
        <button type="button" aria-label="Battery" className="flex w-6 justify-center">
          <Icon>
            <path d="M5 5.500h9.500v6.500H3.500V8.500" stroke="#fff" />
            <path d="M6 7h7.500v3.500H6zM15 7.500h1v2.500h-1z" fill="#fff" />
            <path d="M0 4.500h5v1c0 3-5 3-5 0zM1.300 2v2.500M3.700 2v2.500" stroke="#fff" />
          </Icon>
        </button>
        <button type="button" aria-label="Network" className="flex w-6 justify-center">
          <Icon>
            <path d="M2 14A12 12 0 0114 2.500M5 14a9 9 0 019-8.500M8 14a6 6 0 016-5.500M10.500 14a3.500 3.500 0 013.500-3" stroke="#ddd" strokeWidth="1.100" />
            <circle cx="13" cy="13.500" r="1.300" fill="#fff" />
          </Icon>
        </button>
        <button type="button" aria-label="Volume" className="flex w-6 justify-center">
          <Icon>
            <path d="M.6 6h2.500L6.500 3v10.500L3.100 10.500H.6z" stroke="#fff" strokeWidth="1.100" />
            <path d="M8.500 6q1.500 2 0 4.500M10.700 4.500q2.800 3.500 0 7.500M13 3q4 5 0 10.500" stroke="#fff" strokeWidth="1.100" />
          </Icon>
        </button>
        <button type="button" className="w-[34px] text-center text-xs leading-[18px]">ENG<br />IN</button>
        <button type="button" className="w-[68px] text-center text-xs leading-[18px] whitespace-nowrap">3:37 PM<br />28-May-25</button>
        <button type="button" aria-label="21 notifications" className="relative flex h-10 w-[46px] items-center justify-center">
          <Icon className="mr-2 size-4">
            <path d="M0 0h16v12H7l-3 4v-4H0z" fill="#fff" />
            <path d="M3 3.500h10M3 6h10M3 8.500h6" stroke="#26333a" />
          </Icon>
          <span className="absolute right-[10px] bottom-1 flex size-[18px] items-center justify-center rounded-full border border-[#8a8f92] bg-[#33393c] text-[11px] leading-3">
            21
          </span>
        </button>
        <span className="h-10 w-[5px] border-l border-[#59646a]" />
      </div>
    </div>
  );
}

function App() {
  return (
    <div className="flex h-screen flex-col overflow-hidden font-['DejaVu_Sans_Condensed','DejaVu_Sans',sans-serif] text-xs text-black">
      <div className="relative flex min-h-0 flex-1 flex-col border-x border-t-3 border-[#b4bfce] bg-white">
        <WindowControls />
        <MenuBar />
        <StandardToolbar />
        <main className="flex min-h-0 flex-1 flex-col bg-gradient-to-b from-[#f0f3f8] via-white via-10% to-white px-3 pt-[7px]">
          <div className="flex min-h-0 flex-1 flex-col border border-[#c8d4e0] bg-[#e8f0f8]">
            <div className="border-t border-l border-[#8fa5b8]">
              <h1 className="h-[30px] bg-gradient-to-b from-[#d0e0ec] to-[#aac4dc] pl-[15px] text-[17px] leading-7 font-bold italic">
                Display Authorization Data for User VE651
              </h1>
              <AppToolbar />
            </div>
            <div className="flex min-h-0 flex-1 flex-col pt-2 pr-[7px] pb-[22px] pl-[3px]">
              <SummaryPane />
              <div className="flex h-[6px] shrink-0 items-center justify-center bg-[#dde6ee]">
                <Icon className="h-1 w-5" box="0 0 20 4">
                  <path d="M1 0l2 3M5 0l2 3M9 0l2 3M13 0l2 3M17 0l2 3" stroke="#8c9aa6" strokeWidth="1.800" />
                </Icon>
              </div>
              <ResultGrid />
            </div>
          </div>
        </main>
        <StatusBar />
      </div>
      <Taskbar />
    </div>
  );
}

export default App;
